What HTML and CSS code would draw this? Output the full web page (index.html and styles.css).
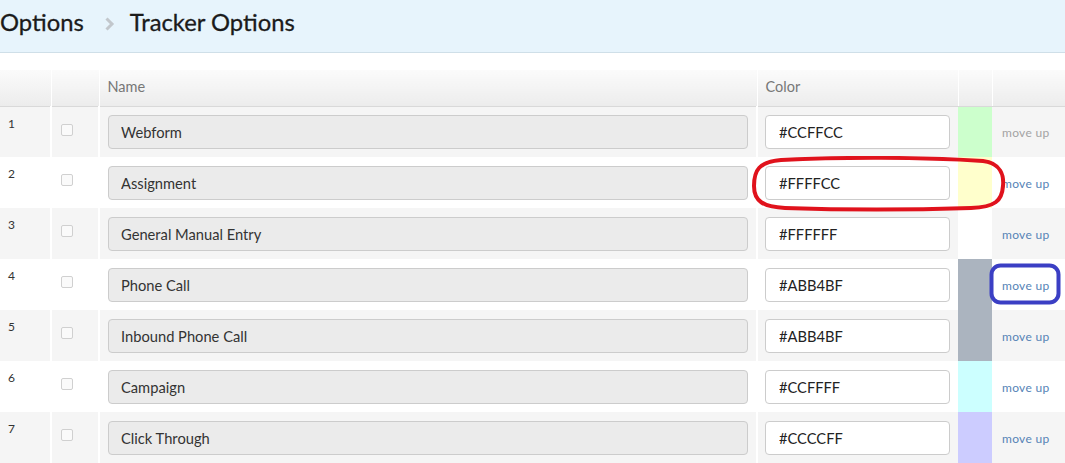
FILE: index.html
```html
<!DOCTYPE html>
<html lang="en">

<head>
  <meta charset="UTF-8">
  <title>Tracker Options</title>
  <link rel="stylesheet" href="styles.css">
</head>

<body>
  <div class="crumbs">
    <span class="crumb">Options</span>
    <span class="sep">
      <svg width="11" height="14" viewBox="0 0 11 14"><path d="M2.5 1.5 L8 7 L2.5 12.5" fill="none" stroke="#c2c7cc" stroke-width="3"/></svg>
    </span>
    <span class="crumb">Tracker Options</span>
  </div>

  <div class="wrap">
    <table class="grid">
      <colgroup>
        <col class="c-num">
        <col class="c-chk">
        <col class="c-name">
        <col class="c-color">
        <col class="c-swatch">
        <col class="c-act">
      </colgroup>
      <thead>
        <tr>
          <th></th>
          <th></th>
          <th>Name</th>
          <th>Color</th>
          <th></th>
          <th></th>
        </tr>
      </thead>
      <tbody id="rows"></tbody>
    </table>

    <!-- markup drawn over the screenshot -->
    <svg class="mark mark-red" width="256" height="56" viewBox="0 0 256 56">
      <path d="M30 4 C90 1 170 1 232 5 C250 7 253 20 252 30 C251 45 244 51 220 52 C160 54 90 54 34 52 C12 51 3 45 3 30 C3 14 8 6 30 4 Z" fill="none" stroke="#e0121c" stroke-width="4"/>
    </svg>
    <svg class="mark mark-blue" width="72" height="42" viewBox="0 0 72 42">
      <rect x="2.5" y="2.5" width="67" height="37" rx="9" fill="none" stroke="#3b3fc4" stroke-width="4"/>
    </svg>
  </div>

  <script>
    var trackers = [
      { name: 'Webform', color: '#CCFFCC' },
      { name: 'Assignment', color: '#FFFFCC' },
      { name: 'General Manual Entry', color: '#FFFFFF' },
      { name: 'Phone Call', color: '#ABB4BF' },
      { name: 'Inbound Phone Call', color: '#ABB4BF' },
      { name: 'Campaign', color: '#CCFFFF' },
      { name: 'Click Through', color: '#CCCCFF' }
    ]

    const tbody = document.querySelector('#rows')

    trackers.forEach((item, i) => {
      const tr = document.createElement('tr')
      tr.innerHTML = `
        <td class="num">${i + 1}</td>
        <td class="chk"><span class="box"></span></td>
        <td class="name"><input class="name-in" type="text" value="${item.name}" readonly></td>
        <td><input class="color-in" type="text" value="${item.color}"></td>
        <td class="swatch" style="background:${item.color}"></td>
        <td class="act"><a href="javascript:;" class="${i == 0 ? 'off' : ''}">move up</a></td>
      `
      tbody.appendChild(tr)
    })
  </script>
</body>

</html>
```

FILE: styles.css
```css
* {
  margin: 0;
  padding: 0;
  box-sizing: border-box;
}

body {
  font-family: Lato, "Liberation Sans", sans-serif;
  color: #333;
  background: #fff;
}

.crumbs {
  height: 53px;
  background: #e7f4fc;
  border-bottom: 1px solid #cfdfe8;
  display: flex;
  align-items: center;
  padding-bottom: 8px;
}

.crumb {
  font-size: 23.8px;
  color: #1b1b1b;
  -webkit-text-stroke: 0.3px #1b1b1b;
}

.sep {
  display: flex;
  margin: 3px 15px 0 20px;
}

.wrap {
  position: relative;
  padding-top: 17px;
}

.grid {
  width: 1065px;
  border-collapse: collapse;
  table-layout: fixed;
}

.c-num { width: 51px; }
.c-chk { width: 48px; }
.c-name { width: 658px; }
.c-color { width: 201px; }
.c-swatch { width: 34px; }
.c-act { width: 73px; }

.grid thead th {
  height: 36px;
  text-align: left;
  font-weight: normal;
  font-size: 14.5px;
  color: #777;
  padding-left: 8px;
  padding-bottom: 2px;
  background: linear-gradient(#fbfbfb, #ececec);
  border-left: 1px solid #fff;
  border-bottom: 1px solid #d9d9d9;
}

.grid thead th:first-child {
  border-left: none;
}

.grid tbody tr {
  height: 51px;
  background: #fff;
}

.grid tbody tr:nth-child(odd) {
  background: #f5f5f5;
}

.grid tbody td {
  border-left: 2px solid #fff;
  padding: 0 9px 0 7px;
  vertical-align: middle;
}

.grid tbody td:first-child {
  border-left: none;
}

.grid td.name {
  padding-left: 8px;
}

.grid td.num {
  vertical-align: top;
  padding-top: 9px;
  padding-left: 8px;
  font-size: 12px;
  color: #333;
}

.grid td.chk {
  vertical-align: top;
  padding-top: 17px;
  padding-left: 9px;
}

.box {
  display: block;
  width: 12px;
  height: 12px;
  border: 1px solid #d0d0d0;
  border-radius: 2px;
  background: #fafafa;
}

.name-in,
.color-in {
  display: block;
  height: 34px;
  border: 1px solid #cccccc;
  border-radius: 4px;
  padding-left: 12px;
  font-family: Lato, "Liberation Sans", sans-serif;
  font-size: 14.7px;
  color: #333;
  outline: none;
}

.name-in {
  background: #ebebeb;
  width: 640px;
}

.color-in {
  background: #fff;
  width: 185px;
  padding-left: 13px;
  color: #222;
}

.grid td.swatch {
  padding: 0;
  border-left: none;
}

.grid td.act {
  padding-left: 10px;
  padding-bottom: 2px;
  border-left: none;
}

.act a {
  font-size: 12px;
  color: #5583b6;
  text-decoration: none;
  letter-spacing: 0.3px;
}

.act a.off {
  color: #a3a3a3;
}

.mark {
  position: absolute;
}

.mark-red {
  left: 751px;
  top: 103px;
}

.mark-blue {
  left: 989px;
  top: 210px;
}
```
